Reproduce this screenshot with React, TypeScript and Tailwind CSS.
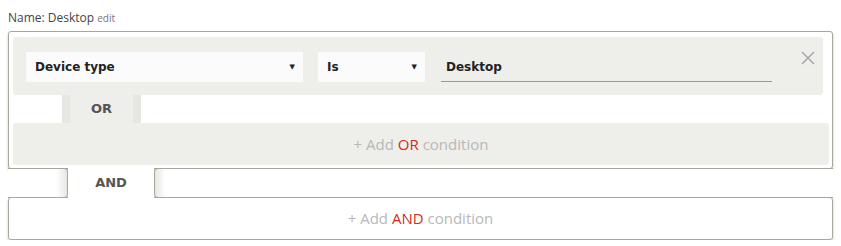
export default function App() {
    return (
        <div className="px-2 pt-[9px] bg-white text-[#333] font-['Open_Sans',sans-serif]">
            <div className="h-[22px] text-[12px] leading-[18px] text-[#444]">
                Name: Desktop <span className="text-[10px] text-[#777]">edit</span>
            </div>

            <div className="border border-[#aaa69c] rounded-[3px] pl-[4px] pr-[3px] pt-[5px] pb-[3px] shadow-[0_2px_3px_rgba(0,0,0,0.22)]">
                <div className="mr-[6px] h-[58px] bg-[#eeeeea] rounded-[3px] flex items-start pl-[13px] pr-[8px] pt-[15px] font-['DejaVu_Sans',sans-serif] font-bold text-[12px] text-[#222]">
                    <div className="w-[277px] h-[30px] bg-[#fbfbfc] flex items-center justify-between pl-[9px] pr-[8px]">
                        <span>Device type</span>
                        <span className="text-[7px]">▼</span>
                    </div>
                    <div className="ml-[15px] w-[107px] h-[30px] bg-[#fbfbfc] flex items-center justify-between pl-[9px] pr-[8px]">
                        <span>Is</span>
                        <span className="text-[7px]">▼</span>
                    </div>
                    <div className="ml-[16px] w-[331px] h-[30px] border-b border-[#999] flex items-center pl-[5px]">
                        Desktop
                    </div>
                    <div className="ml-auto -mt-[1px]">
                        <svg width="14" height="14" viewBox="0 0 14 14" stroke="#a9a9a9" strokeWidth="1.6" fill="none">
                            <path d="M1 1L13 13M13 1L1 13" />
                        </svg>
                    </div>
                </div>

                <div className="flex h-[28px]">
                    <div className="ml-[49px] w-[79px] bg-[linear-gradient(to_right,#e6e6e2_8px,#eeeeea_8px,#eeeeea_71px,#e6e6e2_71px)] flex items-center justify-center font-['DejaVu_Sans',sans-serif] font-bold text-[13px] text-[#555]">
                        OR
                    </div>
                </div>

                <div className="h-[42px] bg-[#eeeeea] rounded-[3px] flex items-center justify-center text-[15px] text-[#b8b8b8]">
                    + Add&nbsp;<span className="text-[#d42a20]">OR</span>&nbsp;condition
                </div>
            </div>

            <div className="relative flex h-[30px] -my-px">
                <div className="w-[60px] border-y border-r border-[#aaa69c] rounded-r-[4px] bg-[linear-gradient(to_right,white_82%,#e6e6e2)]" />
                <div className="w-[86px] bg-white flex items-center justify-center font-['DejaVu_Sans',sans-serif] font-bold text-[13px] text-[#555]">
                    AND
                </div>
                <div className="flex-1 border-y border-l border-[#aaa69c] rounded-l-[4px] bg-[linear-gradient(to_right,#e6e6e2,white_10px)]" />
            </div>

            <div className="h-[43px] border border-[#aaa69c] rounded-[3px] flex items-center justify-center text-[15px] text-[#b8b8b8] shadow-[0_2px_3px_rgba(0,0,0,0.22)]">
                + Add&nbsp;<span className="text-[#d42a20]">AND</span>&nbsp;condition
            </div>
        </div>
    )
}
